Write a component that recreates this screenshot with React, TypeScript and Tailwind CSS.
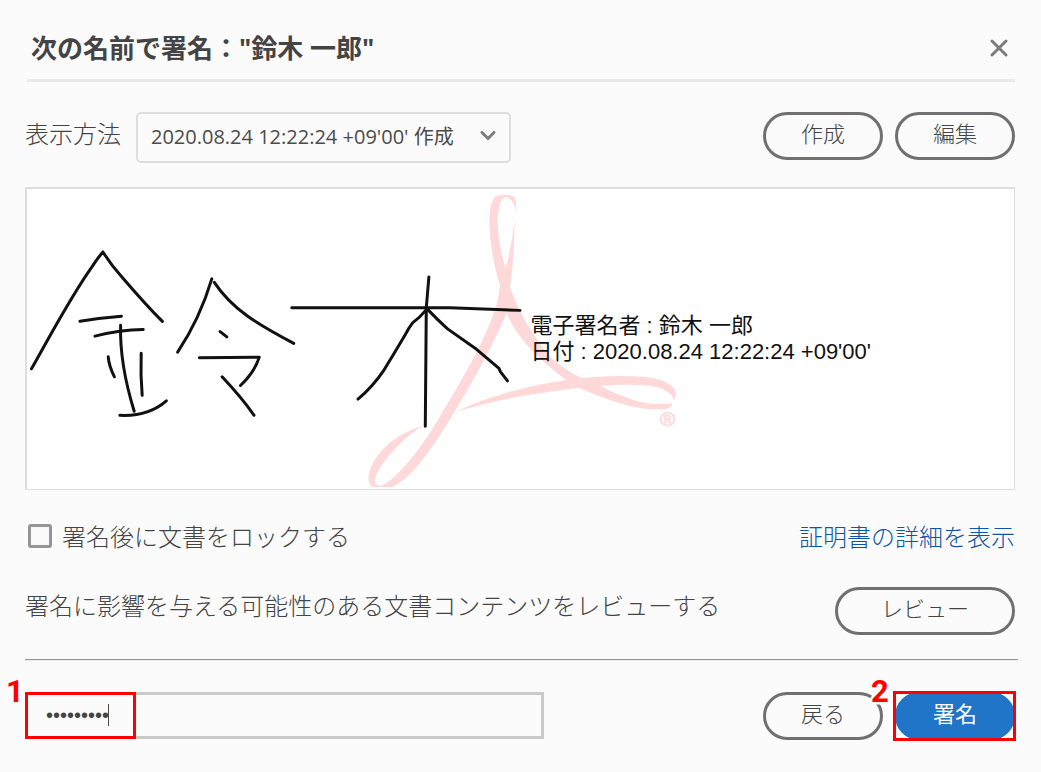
import { useState } from "react";
import type { ReactNode } from "react";
import clsx from "clsx";

interface PillButtonProps {
  children: ReactNode;
  primary?: boolean;
  wide?: boolean;
}

function PillButton({ children, primary, wide }: PillButtonProps) {
  return (
    <button
      type="button"
      className={clsx(
        "h-12 shrink-0 rounded-full border-[3px] pb-2 text-[22px] leading-none",
        wide ? "w-[180px]" : "w-[120px]",
        primary ? "border-[#2175c9] bg-[#2175c9] font-normal text-white" : "border-[#707070] bg-transparent"
      )}
    >
      {children}
    </button>
  );
}

function Watermark() {
  return (
    <svg viewBox="-759 27 2961 900" className="absolute inset-0 size-full" fill="#ffd9d9" aria-hidden="true">
      <path d="M708 105C708 75 694 52 675 52C660 55 653 95 653 130C655 180 665 230 677 265L690 322C712 385 755 465 810 530C840 558 875 582 910 597L965 620C1000 638 1050 660 1090 668C1125 674 1160 674 1178 670C1174 684 1165 688 1150 689C1070 692 985 662 900 625C870 612 830 580 790 545C740 500 700 450 680 400L655 355L660 318C643 260 630 200 628 130C627 95 632 65 645 50C658 43 690 43 702 50C710 60 709 80 708 105Z" />
      <path d="M704 118C703 180 700 260 690 322L680 400C640 490 600 570 522 698C470 785 400 895 335 922L280 922C262 915 262 890 270 870C290 810 360 755 430 738C370 770 300 850 285 895C281 912 290 920 304 917C345 905 430 800 485 700C560 578 632 450 655 355L660 318C665 300 672 280 677 265C690 220 698 170 704 118Z" />
      <path d="M525 698C620 650 740 618 865 600C940 590 1020 586 1090 591C1140 596 1188 612 1188 642C1188 650 1186 656 1182 662C1178 640 1150 622 1100 617C1050 613 1000 616 960 618C830 630 640 658 525 698Z" />
      <text x="1163" y="739" textAnchor="middle" fontSize="62" className="font-['Liberation_Sans',sans-serif]" stroke="#ffd9d9" strokeWidth="2">®</text>
    </svg>
  );
}

function Handwriting() {
  return (
    <svg
      viewBox="27 189 494 300"
      className="relative w-full overflow-visible"
      fill="none"
      stroke="#111"
      strokeWidth="3"
      strokeLinecap="round"
      strokeLinejoin="round"
      role="img"
      aria-label="鈴木"
    >
      <path d="M31.500 369C48 340 70 298 92 267Q97 259 103 252Q111 265 122 277C134 291 148 307 162.500 321.500" />
      <path d="M80 321.300Q100 318 121.500 316.300M95 336.300Q120 330 143.300 329.700" />
      <path d="M120.700 325.500C120 350 124 378 134.300 411.500" />
      <path d="M108.300 357Q109 366 114.500 377M141.300 353.500Q140.500 375 142.300 395.500" />
      <path d="M120 415.500Q148 417 166.500 401" />
      <path d="M177.800 352.300Q200 319 212 279M214.500 282.500C232 309 257 324 294 343.500" />
      <path d="M220.300 331.700L227 337M199.500 358L259.500 357.300Q255 372 240.700 385.700M222.300 377Q242 398 254.300 415.500" />
      <path d="M292 307.800H450L520.500 310.500" />
      <path d="M429.300 277L426.700 308L425.700 426.500" />
      <path d="M427 309.500Q420 318 413 323Q409 328 405 336Q395 353 384.500 370Q373 387 358.300 399.300" />
      <path d="M428 309.500Q438 320 448 329L477 349.500L499.500 368.500L501 372L508 381" />
    </svg>
  );
}

export default function App() {
  const [password, setPassword] = useState("123456789");
  const [locked, setLocked] = useState(false);

  return (
    <main className="min-h-screen bg-[#fbfbfb] pt-6 pr-[26px] pb-8 pl-[25px] font-['Noto_Sans_CJK_JP',sans-serif] text-2xl font-light text-[#444]">
      <header className="ml-0.5 flex h-[58px] items-start justify-between border-b-[3px] border-[#eaeaea] pr-0.5 pl-1">
        <h1 className="font-['Open_Sans','Noto_Sans_CJK_JP',sans-serif] text-[26px] leading-[48px] font-bold">
          次の名前で署名：&quot;鈴木 一郎&quot;
        </h1>
        <button type="button" aria-label="閉じる" className="grid h-12 w-7 place-items-center">
          <svg viewBox="0 0 18 18" className="size-[18px]" stroke="#7c7c7c" strokeWidth="3" strokeLinecap="round">
            <path d="M2 2L16 16M16 2L2 16" />
          </svg>
        </button>
      </header>

      <div className="mt-[30px] flex items-start justify-between">
        <div className="flex items-start gap-[15px]">
          <label htmlFor="appearance" className="leading-[42px]">表示方法</label>
          <div className="relative">
            <select
              id="appearance"
              className="h-[51px] w-[375px] appearance-none rounded-[5px] border-2 border-[#dedede] bg-[#fbfbfb] pb-0.5 pl-[13px] font-['Open_Sans','Noto_Sans_CJK_JP',sans-serif] text-xl font-normal text-[#4b4b4b]"
            >
              <option>2020.08.24 12:22:24 +09&apos;00&apos; 作成</option>
            </select>
            <svg viewBox="0 0 16 10" className="pointer-events-none absolute top-[19px] right-[15px] h-2.5 w-4" fill="none" stroke="#7c7c7c" strokeWidth="3" strokeLinecap="round" strokeLinejoin="round">
              <path d="M2 1.500L8 7.500L14 1.500" />
            </svg>
          </div>
        </div>
        <div className="flex gap-3">
          <PillButton>作成</PillButton>
          <PillButton>編集</PillButton>
        </div>
      </div>

      <section className="relative mt-6 grid grid-cols-2 items-center border-t-2 border-r border-b border-l-2 border-[#dedede] bg-white">
        <Watermark />
        <Handwriting />
        <div className="relative pl-2.5 font-['Liberation_Sans','Noto_Sans_CJK_JP',sans-serif] text-[22px] leading-[26px] font-normal whitespace-nowrap text-[#111]">
          <p>電子署名者 : 鈴木 一郎</p>
          <p>日付 : 2020.08.24 12:22:24 +09&apos;00&apos;</p>
        </div>
      </section>

      <div className="mt-7 flex items-center justify-between leading-9">
        <label className="flex items-center gap-2.5">
          <input
            type="checkbox"
            checked={locked}
            onChange={(e) => setLocked(e.target.checked)}
            className="ml-[3px] size-6 appearance-none rounded-[3px] border-[3px] border-[#959595] checked:bg-[#2175c9]"
          />
          署名後に文書をロックする
        </label>
        <a href="#certificate" className="text-[#0d56a6]">証明書の詳細を表示</a>
      </div>

      <div className="mt-[33px] flex items-start justify-between">
        <p className="leading-9">署名に影響を与える可能性のある文書コンテンツをレビューする</p>
        <PillButton wide>レビュー</PillButton>
      </div>

      <hr className="mt-6 -mr-[3px] border-t border-b border-t-[#959595] border-b-[#eaeaea]" />

      <form className="mt-[31px] flex items-start justify-between" onSubmit={(e) => e.preventDefault()}>
        <div className="relative">
          <input
            type="password"
            aria-label="パスワード"
            value={password}
            onChange={(e) => setPassword(e.target.value)}
            className="h-[47px] w-[519px] border-[3px] border-[#cacaca] bg-transparent pl-[18px] font-['Liberation_Sans',sans-serif] text-xl font-normal outline-none"
          />
          <span className="absolute top-3 left-[83px] h-[22px] w-px bg-[#4b4b4b]" />
          <span className="pointer-events-none absolute top-0 left-0 h-[47px] w-[111px] border-[3px] border-[#f00]" />
          <Marker className="-top-4 -left-[19px]">1</Marker>
        </div>
        <div className="flex gap-3">
          <PillButton>戻る</PillButton>
          <div className="relative">
            <PillButton primary>署名</PillButton>
            <span className="pointer-events-none absolute -top-px -right-px -bottom-px -left-0.5 border-[3px] border-[#f00]" />
            <Marker className="-top-4 -left-6">2</Marker>
          </div>
        </div>
      </form>
    </main>
  );
}

// numbered step callout, outlined in the page colour so it reads over borders
function Marker({ children, className }: { children: ReactNode; className: string }) {
  return (
    <span
      className={clsx(
        "absolute font-['Roboto',sans-serif] text-[31px] leading-8 font-bold text-[#f00] [paint-order:stroke_fill] [-webkit-text-stroke:5px_#fbfbfb]",
        className
      )}
    >
      {children}
    </span>
  );
}
